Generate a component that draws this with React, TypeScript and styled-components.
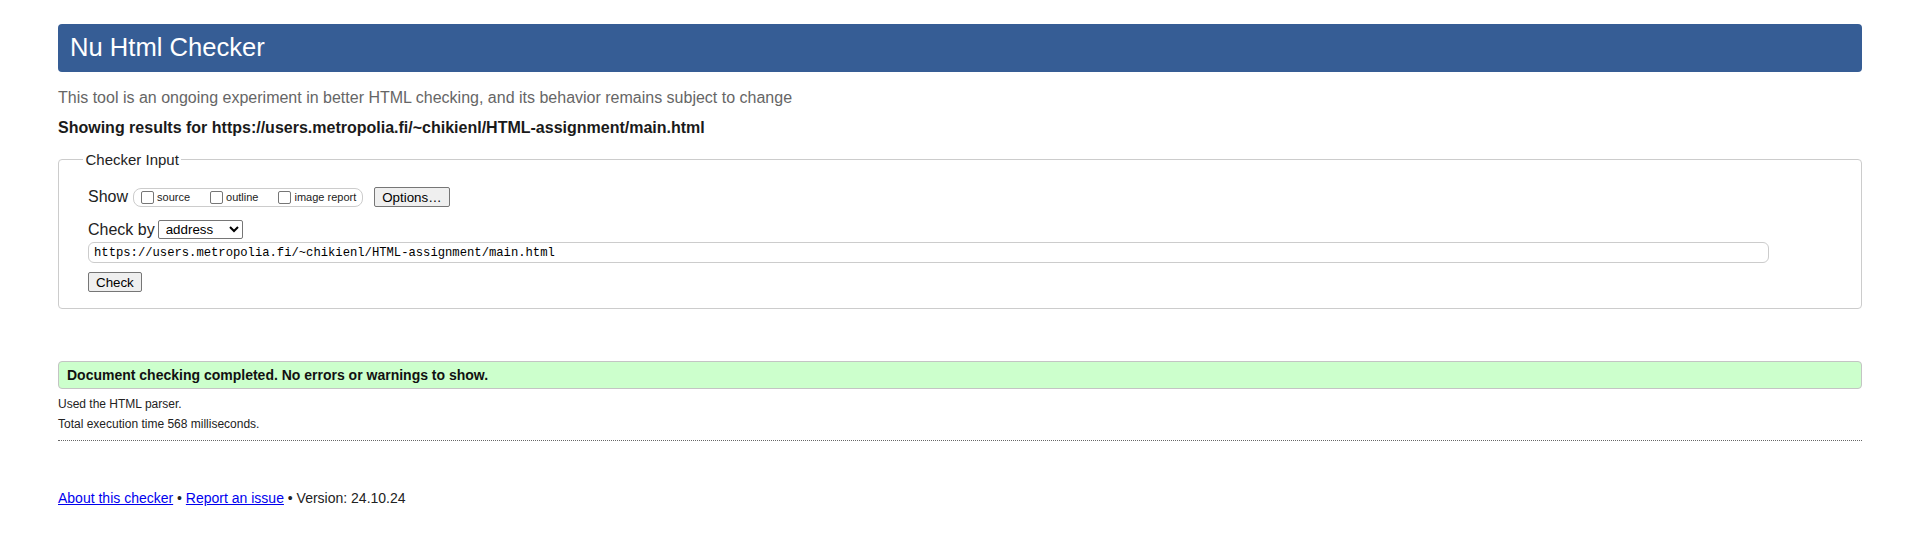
import React from "react";
import styled, { createGlobalStyle } from "styled-components";

const GlobalStyle = createGlobalStyle`
  html, body {
    margin: 0;
    padding: 0;
    background: #ffffff;
  }
  body {
    font-family: "Liberation Sans", Arial, sans-serif;
    color: #222222;
  }
`;

const Page = styled.div`
  padding: 24px 54px 0 58px;
`;

const Title = styled.h1`
  margin: 0;
  background: #365d95;
  color: #ffffff;
  border-radius: 4px;
  font-size: 25.6px;
  font-weight: normal;
  line-height: 29px;
  padding: 9px 12px 10px;
`;

const Subtitle = styled.p`
  margin: 17px 0 0;
  font-size: 16px;
  line-height: 18px;
  color: #666666;
`;

const ResultsFor = styled.p`
  margin: 12px 0 0;
  font-size: 16px;
  line-height: 18px;
  font-weight: bold;
  color: #1a1a1a;
`;

const Fieldset = styled.fieldset`
  margin: 14px 0 0;
  padding: 0 30px 16px 29px;
  border: 1px solid #cccccc;
  border-radius: 4px;
  min-width: 0;
`;

const Legend = styled.legend`
  font-size: 15px;
  padding: 0 2.5px;
  margin-left: -5px;
  color: #222222;
`;

const Row = styled.div<{ $top: number; $height: number }>`
  display: flex;
  align-items: center;
  margin-top: ${(p) => p.$top}px;
  height: ${(p) => p.$height}px;
`;

const RowLabel = styled.span<{ $gap: number }>`
  font-size: 16px;
  margin-right: ${(p) => p.$gap}px;
`;

const CheckGroup = styled.div`
  display: flex;
  align-items: center;
  gap: 20px;
  box-sizing: border-box;
  height: 19px;
  border: 1px solid #cccccc;
  border-radius: 8px;
  padding: 0 6px 0 7px;
  margin-right: 11px;
`;

const OptionItem = styled.label`
  display: flex;
  align-items: center;
  font-size: 11px;
  color: #222222;
`;

const Checkbox = styled.input`
  appearance: none;
  -webkit-appearance: none;
  box-sizing: border-box;
  width: 13px;
  height: 13px;
  margin: 0 3px 0 0;
  border: 1px solid #767676;
  border-radius: 2px;
  background: #ffffff;
`;

const Button = styled.button`
  box-sizing: border-box;
  height: 20px;
  padding: 0 7px;
  font-family: "Liberation Sans", Arial, sans-serif;
  font-size: 13.33px;
  color: #000000;
  background: #efefef;
  border: 1px solid #767676;
  border-radius: 2px;
`;

const CheckButton = styled(Button)`
  display: block;
  margin-top: 9px;
`;

const Select = styled.select`
  box-sizing: border-box;
  width: 85px;
  height: 19px;
  padding: 0 0 0 3px;
  font-family: "Liberation Sans", Arial, sans-serif;
  font-size: 13.33px;
  color: #000000;
  background: #ffffff;
  border: 1px solid #767676;
  border-radius: 2px;
`;

const UrlInput = styled.input`
  display: block;
  box-sizing: border-box;
  margin-top: 3px;
  width: calc(100% - 62px);
  height: 21px;
  padding: 0 5px;
  font-family: "Liberation Mono", "DejaVu Sans Mono", monospace;
  font-size: 12.2px;
  color: #000000;
  border: 1px solid #cccccc;
  border-radius: 6px;
`;

const ResultBox = styled.div`
  margin-top: 52px;
  padding: 5px 8px;
  font-size: 14px;
  line-height: 16px;
  font-weight: bold;
  color: #111111;
  background: #ccffcc;
  border: 1px solid #c4c4c4;
  border-radius: 4px;
`;

const MetaLine = styled.p<{ $top: number }>`
  margin: ${(p) => p.$top}px 0 0;
  font-size: 12px;
  line-height: 20px;
  color: #222222;
`;

const Divider = styled.hr`
  margin: 6px 0 0;
  border: 0;
  border-top: 1px dotted #666666;
  height: 0;
`;

const Footer = styled.p`
  margin: 49px 0 0;
  font-size: 14px;
  line-height: 16px;
  color: #222222;
`;

const FooterLink = styled.a`
  color: #0000ee;
  text-decoration: underline;
`;

const options = ["source", "outline", "image report"];

export default function App() {
  const url = "https://users.metropolia.fi/~chikienl/HTML-assignment/main.html";
  return (
    <>
      <GlobalStyle />
      <Page>
        <Title>Nu Html Checker</Title>
        <Subtitle>
          This tool is an ongoing experiment in better HTML checking, and its behavior remains subject to change
        </Subtitle>
        <ResultsFor>Showing results for {url}</ResultsFor>
        <Fieldset>
          <Legend>Checker Input</Legend>
          <Row $top={19} $height={20}>
            <RowLabel $gap={5}>Show</RowLabel>
            <CheckGroup>
              {options.map((o) => (
                <OptionItem key={o}>
                  <Checkbox type="checkbox" />
                  {o}
                </OptionItem>
              ))}
            </CheckGroup>
            <Button type="button">Options…</Button>
          </Row>
          <Row $top={13} $height={19}>
            <RowLabel $gap={3}>Check by</RowLabel>
            <Select defaultValue="address">
              <option value="address">address</option>
              <option value="file">file upload</option>
              <option value="text">text input</option>
            </Select>
          </Row>
          <UrlInput type="text" defaultValue={url} />
          <CheckButton type="button">Check</CheckButton>
        </Fieldset>
        <ResultBox>Document checking completed. No errors or warnings to show.</ResultBox>
        <MetaLine $top={5}>Used the HTML parser.</MetaLine>
        <MetaLine $top={0}>Total execution time 568 milliseconds.</MetaLine>
        <Divider />
        <Footer>
          <FooterLink href="#about">About this checker</FooterLink> •{" "}
          <FooterLink href="#issue">Report an issue</FooterLink> • Version: 24.10.24
        </Footer>
      </Page>
    </>
  );
}
